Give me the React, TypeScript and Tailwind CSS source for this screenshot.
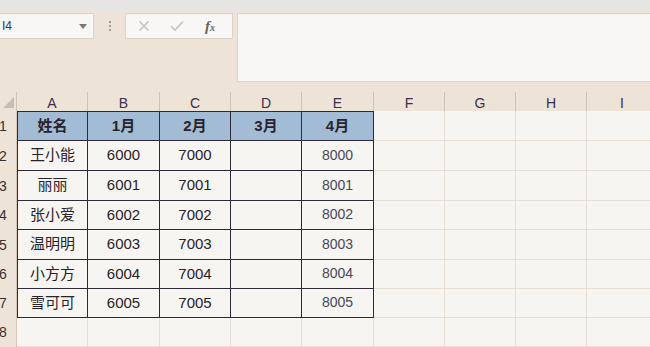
import React from "react";

const cols = ["A", "B", "C", "D", "E", "F", "G", "H", "I"];
const widths = [71, 72, 71, 71, 72, 71, 71, 71, 71];
const rowHeights = [30, 30, 30, 29, 30, 29, 29, 29];

const data: (string | null)[][] = [
  ["姓名", "1月", "2月", "3月", "4月"],
  ["王小能", "6000", "7000", "", "8000"],
  ["丽丽", "6001", "7001", "", "8001"],
  ["张小爱", "6002", "7002", "", "8002"],
  ["温明明", "6003", "7003", "", "8003"],
  ["小方方", "6004", "7004", "", "8004"],
  ["雪可可", "6005", "7005", "", "8005"],
  ["", "", "", "", ""],
];

const font = { fontFamily: '"Liberation Sans", "Noto Sans CJK SC", sans-serif' };

export default function App() {
  return (
    <div
      className="w-[650px] h-[347px] overflow-hidden bg-[#eee3d7] text-[#222]"
      style={font}
    >
      {/* top strip */}
      <div className="h-[12px] bg-[#e6e5e4]" />
      {/* toolbar */}
      <div className="h-[80px] flex items-start pt-[1px]">
        <div className="w-[94px] h-[26px] shrink-0 bg-[#f8f7f5] border border-l-0 border-[#ddd2c8] flex items-center justify-between pl-[2px] pr-[6px]">
          <span className="text-[12px] text-[#2a3566]">I4</span>
          <svg width="8" height="5" viewBox="0 0 8 5">
            <path d="M0 0 L8 0 L4 5 Z" fill="#777" />
          </svg>
        </div>
        <div className="w-[31px] h-[26px] shrink-0 flex flex-col items-center justify-center gap-[2px]">
          <div className="w-[2px] h-[2px] bg-[#a89c94]" />
          <div className="w-[2px] h-[2px] bg-[#a89c94]" />
          <div className="w-[2px] h-[2px] bg-[#a89c94]" />
        </div>
        <div className="w-[108px] h-[26px] shrink-0 bg-[#f8f7f5] border border-[#ddd2c8] flex items-center">
          <svg width="12" height="12" viewBox="0 0 12 12" className="ml-[12px]">
            <path d="M1.5 1.5 L10.5 10.5 M10.5 1.5 L1.5 10.5" stroke="#cbc2bd" strokeWidth="1.6" />
          </svg>
          <svg width="14" height="12" viewBox="0 0 14 12" className="ml-[20px]">
            <path d="M1 6 L5 10 L13 1.5" stroke="#cbc2bd" strokeWidth="1.7" fill="none" />
          </svg>
          <span
            className="ml-[21px] text-[15px] italic font-bold text-[#6b625e]"
            style={{ fontFamily: '"Liberation Serif", serif' }}
          >
            f<span className="text-[10px]">x</span>
          </span>
        </div>
        <div className="ml-[4px] flex-1 h-[69px] bg-[#f8f7f5] border border-r-0 border-[#ddd2c8]" />
      </div>

      {/* sheet */}
      <div className="flex flex-col">
        {/* column header */}
        <div className="flex h-[19px]">
          <div className="w-[17px] shrink-0 h-full relative border-r border-[#cfc3b9]">
            <svg width="11" height="11" viewBox="0 0 11 11" className="absolute right-[2px] bottom-[3px]">
              <path d="M11 0 L11 11 L0 11 Z" fill="#c5bdb6" />
            </svg>
          </div>
          {cols.map((c, i) => (
            <div
              key={c}
              className="h-full flex items-start justify-center pt-[1px] text-[14px] text-[#3a3050] border-r border-[#cfc3b9] shrink-0"
              style={{ width: widths[i], ...font }}
            >
              {c}
            </div>
          ))}
        </div>
        {/* rows */}
        {rowHeights.map((h, r) => (
          <div key={r} className="flex" style={{ height: h }}>
            <div className="w-[17px] h-full flex items-center text-[14px] text-[#333] border-r border-[#d9c6b4] shrink-0 overflow-hidden">
              <span className="-ml-[1px]">{r + 1}</span>
            </div>
            {cols.map((c, i) => {
              const inTable = r < 7 && i < 5;
              const isHeader = r === 0 && i < 5;
              const val = i < 5 ? data[r][i] : "";
              const isE = i === 4 && r > 0;
              return (
                <div
                  key={c}
                  className={
                    "h-full shrink-0 flex justify-center " +
                    (isE ? "items-end pb-[4px] " : "items-center ") +
                    (isHeader ? "bg-[#a3bcd6] font-bold " : "bg-[#f6f5f2] ") +
                    (inTable
                      ? "border-r border-b border-[#2f2838] "
                      : "border-r border-b border-[#e6ddd5] ") +
                    (r === 0 && i < 5 ? "border-t border-t-[#2f2838] " : "") +
                    (i === 0 && r < 7 ? "border-l border-l-[#2f2838] " : "") +
                    (isE ? "text-[14px] text-[#4a4658] " : "text-[15px] text-[#2a2228] ")
                  }
                  style={{ width: widths[i] }}
                >
                  {val}
                </div>
              );
            })}
          </div>
        ))}
      </div>
    </div>
  );
}
